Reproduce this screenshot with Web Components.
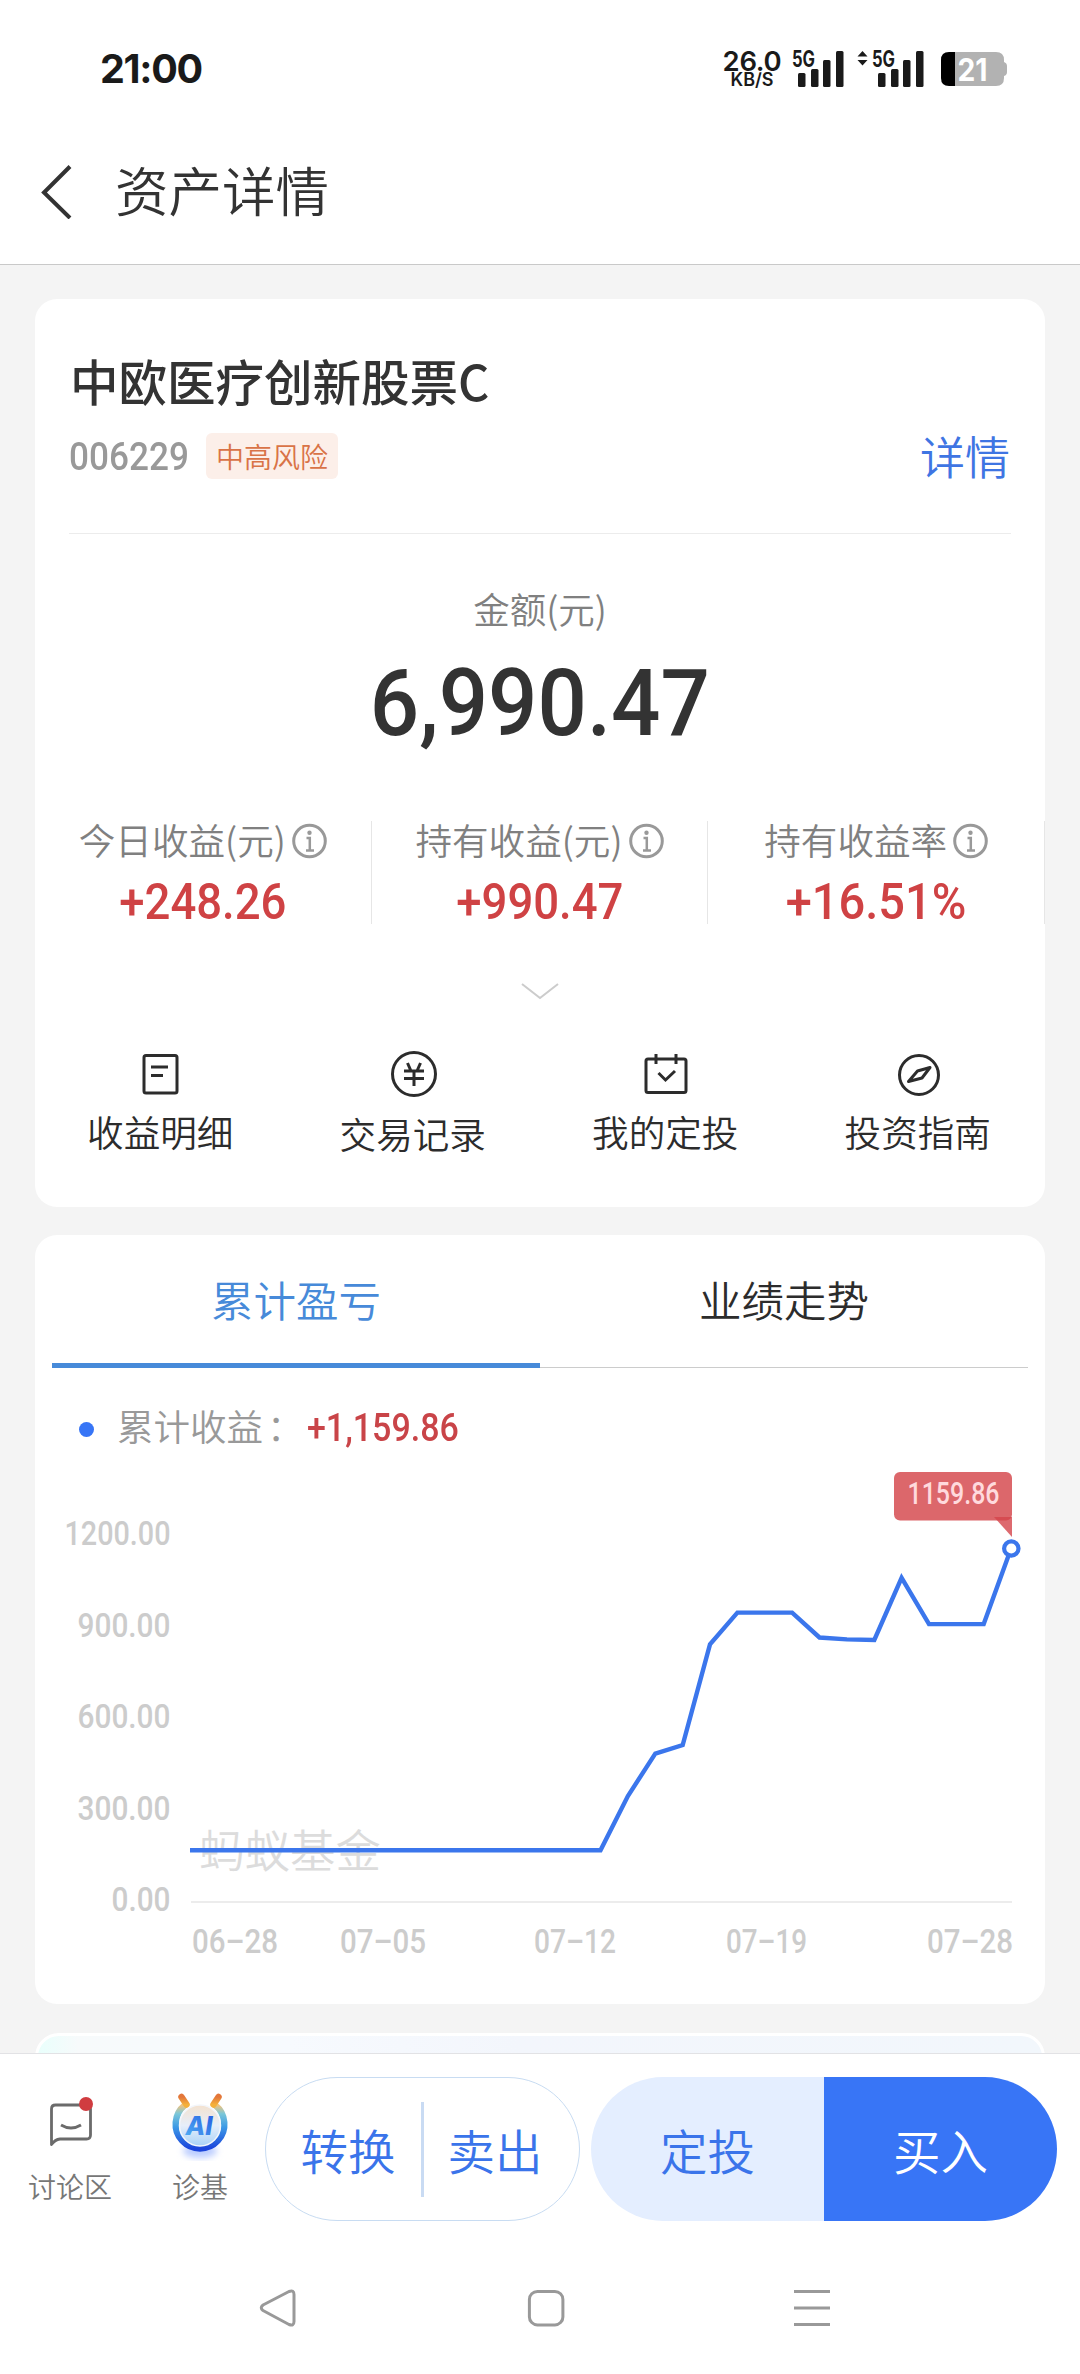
<!DOCTYPE html>
<html lang="zh-CN">
<head>
<meta charset="utf-8">
<title>资产详情</title>
<style>
	body {
		margin: 0;
		width: 1080px;
		height: 2374px;
		overflow: hidden;
		display: flex;
		flex-direction: column;
		background: #fff;
		color: #333;
		font-family: "Noto Sans CJK SC", sans-serif;
		font-weight: 350;
	}

	main {
		box-sizing: border-box;
		height: 1788px;
		padding: 34px 35px 0;
		overflow: hidden;
		background: #f4f4f4;
	}
</style>
</head>
<body>
	<status-bar></status-bar>
	<title-bar>资产详情</title-bar>
	<main>
		<asset-card></asset-card>
		<trend-card></trend-card>
		<promo-card></promo-card>
	</main>
	<action-bar></action-bar>
	<system-nav></system-nav>

<script>
// Small helper so that each class only holds its own markup
class BaseElement extends HTMLElement {
	constructor() {
		super();
		this.attachShadow({mode:'open'});
		this.shadowRoot.innerHTML = this.render();
	}
}

// Digits, slightly condensed. Size with font-size, width with --sx
class NumText extends BaseElement {
	render() {
		return `
			<style>
				:host {
					display: inline-block;
					font-family: Roboto, "Liberation Sans", sans-serif;
					font-weight: 500;
					white-space: nowrap;
					transform: scaleX(var(--sx, 0.93));
					transform-origin: var(--origin, center);
				}
			</style>
			<slot></slot>
		`;
	}
}
customElements.define('num-text', NumText);

class StatusBar extends BaseElement {
	signal() {
		return `
			<svg width="52" height="38" viewBox="0 0 52 38">
				<text x="0" y="16.5" textLength="23" lengthAdjust="spacingAndGlyphs">5G</text>
				<rect x="6" y="23" width="7.5" height="14" rx="1.5"/>
				<rect x="19" y="19" width="7.5" height="18" rx="1.5"/>
				<rect x="31" y="10" width="7.5" height="27" rx="1.5"/>
				<rect x="44" y="1" width="7.5" height="36" rx="1.5"/>
			</svg>
		`;
	}

	render() {
		return `
			<style>
				:host {
					box-sizing: border-box;
					height: 118px;
					padding: 19px 73px 0 100px;
					display: flex;
					align-items: center;
					color: #1a1a1a;
					font-family: Inter, sans-serif;
				}
				.time {
					flex: 1;
					font-size: 39.5px;
					font-weight: 700;
					letter-spacing: -1.3px;
				}
				.net {
					display: flex;
					flex-direction: column;
					align-items: center;
					width: 58px;
					margin-right: 11px;
					font-weight: 600;
				}
				.net b { font-weight: 600; font-size: 27.5px; line-height: 22px; letter-spacing: -0.3px; }
				.net span { font-size: 18px; line-height: 15px; }
				svg { display: block; overflow: visible; fill: #1a1a1a; }
				svg text { font: 700 22.5px Inter, sans-serif; }
				.arrows { margin: 0 4px 0 13px; }
				.battery { margin-left: 17px; }
			</style>
			<span class="time">21:00</span>
			<div class="net"><b>26.0</b><span>KB/S</span></div>
			${this.signal()}
			<svg class="arrows" width="11" height="38" viewBox="0 0 11 38">
				<path d="M5.5 1L10.5 6.5H.5zM5.5 15.5L10.5 10H.5z"/>
			</svg>
			${this.signal()}
			<svg class="battery" width="66" height="34" viewBox="0 0 66 34">
				<path fill="#b2b2b2" d="M14 0H55Q63 0 63 8V10Q66 11 66 14V20Q66 23 63 24V26Q63 34 55 34H14z"/>
				<path fill="#000" d="M14 0H8Q0 0 0 8V26Q0 34 8 34H14z"/>
				<text x="16.5" y="29" textLength="30" lengthAdjust="spacingAndGlyphs" style="fill:#fff;font-size:31px">21</text>
			</svg>
		`;
	}
}
customElements.define('status-bar', StatusBar);

class TitleBar extends BaseElement {
	render() {
		return `
			<style>
				:host {
					box-sizing: border-box;
					height: 147px;
					padding-left: 40px;
					display: flex;
					align-items: center;
					border-bottom: 1px solid #c9c9c9;
					font-size: 53.5px;
				}
				svg { margin: 1px 43px 0 0; }
				span { line-height: 60px; padding-bottom: 5px; }
			</style>
			<svg width="32" height="54" viewBox="0 0 32 54" fill="none" stroke="#333" stroke-width="4">
				<path d="M30 1.5L4 27.5L30 53"/>
			</svg>
			<span><slot></slot></span>
		`;
	}
}
customElements.define('title-bar', TitleBar);

// One profit column: label in the default slot, value attribute below it
class ProfitStat extends BaseElement {
	render() {
		return `
			<style>
				:host {
					flex: 1;
					box-sizing: border-box;
					height: 103px;
					display: flex;
					flex-direction: column;
					align-items: center;
					border-right: 1px solid #e6e6e6;
				}
				.label {
					display: flex;
					align-items: center;
					height: 38px;
					color: #808080;
					font-size: 36.6px;
					line-height: 36px;
					white-space: nowrap;
				}
				.label span { padding-bottom: 1px; }
				svg { margin-left: 6px; }
				num-text {
					margin-top: 20px;
					color: #cf4244;
					font-size: 50px;
					line-height: 46px;
				}
			</style>
			<div class="label">
				<span><slot></slot></span>
				<svg width="35" height="38" viewBox="0 0 35 38" fill="none" stroke="#999" stroke-width="3">
					<circle cx="17.5" cy="20" r="15.8"/>
					<path stroke-width="2.5" d="M14.5 17H17.8V29M14 29.5H22"/>
					<circle cx="17.5" cy="11.8" r="2.2" fill="#999" stroke="none"/>
				</svg>
			</div>
			<num-text style="--sx:${this.getAttribute('sx') || '.91'}">${this.getAttribute('value')}</num-text>
		`;
	}
}
customElements.define('profit-stat', ProfitStat);

// Icon with a caption, the icon goes in the "icon" slot
class ActionLink extends BaseElement {
	render() {
		return `
			<style>
				:host {
					flex: 1;
					display: flex;
					flex-direction: column;
					align-items: center;
					color: #2c2c2c;
					font-size: 36.6px;
					line-height: 44px;
				}
				.icon { height: 46px; margin-bottom: var(--gap, 13px); }
				.text { margin-left: -2px; }
				::slotted(svg) { display: block; }
			</style>
			<div class="icon"><slot name="icon"></slot></div>
			<div class="text"><slot></slot></div>
		`;
	}
}
customElements.define('action-link', ActionLink);

class AssetCard extends BaseElement {
	render() {
		return `
			<style>
				:host {
					box-sizing: border-box;
					height: 908px;
					margin-bottom: 28px;
					padding-top: 51px;
					display: flex;
					flex-direction: column;
					border-radius: 22px;
					background: #fff;
				}
				h1 {
					margin: 0 0 23px 35px;
					font-size: 48.5px;
					font-weight: 500;
					line-height: 60px;
				}
				.row {
					display: flex;
					align-items: center;
					height: 46px;
					margin: 0 34px;
					padding-bottom: 54px;
					border-bottom: 1px solid #ececec;
				}
				.code { width: 137px; margin-top: 2px; color: #999; font-size: 38px; --sx: .925; --origin: left; }
				.risk {
					padding: 0 10px;
					border-radius: 6px;
					background: #fcefe9;
					color: #d97347;
					font-size: 28px;
					line-height: 46px;
				}
				.more { margin: 0 1px 0 auto; color: #3f75e3; font-size: 45px; line-height: 46px; padding-bottom: 1px; }
				.caption { margin-top: 50px; text-align: center; color: #808080; font-size: 36.5px; line-height: 50px; }
				.amount { margin: 15px auto 62px; font-size: 93px; line-height: 110px; --sx: .935; }
				.stats, .links { display: flex; }
				.fold { display: block; margin: 59px auto 51px; }
				.links svg { fill: none; stroke: #2c2c2c; stroke-width: 3; }
			</style>
			<h1>中欧医疗创新股票C</h1>
			<div class="row">
				<num-text class="code">006229</num-text>
				<span class="risk">中高风险</span>
				<span class="more">详情</span>
			</div>
			<div class="caption">金额(元)</div>
			<num-text class="amount">6,990.47</num-text>
			<div class="stats">
				<profit-stat value="+248.26">今日收益(元)</profit-stat>
				<profit-stat value="+990.47">持有收益(元)</profit-stat>
				<profit-stat value="+16.51%" sx=".94">持有收益率</profit-stat>
			</div>
			<svg class="fold" width="38" height="17" viewBox="0 0 38 17" fill="none" stroke="#ccc" stroke-width="2">
				<path d="M1 1L19 15L37 1"/>
			</svg>
			<div class="links">
				<action-link>
					<svg slot="icon" width="46" height="46" viewBox="0 0 46 46">
						<rect x="6" y="4.5" width="33" height="37.5" rx="2"/>
						<path d="M13 16H30M13 24.5H25"/>
					</svg>
					收益明细
				</action-link>
				<action-link style="--gap:15px">
					<svg slot="icon" width="46" height="46" viewBox="0 0 46 46">
						<circle cx="23" cy="23" r="21.5"/>
						<path d="M16.5 12L20 20M29.5 12L26 20M13 20H33M13 27.5H33M23 20V35"/>
					</svg>
					交易记录
				</action-link>
				<action-link>
					<svg slot="icon" width="46" height="46" viewBox="0 0 46 46">
						<rect x="3" y="8" width="40" height="33.5" rx="2"/>
						<path d="M13 3V13M33 3V13M15.5 22L22.5 29L32 20"/>
					</svg>
					我的定投
				</action-link>
				<action-link>
					<svg slot="icon" width="46" height="46" viewBox="0 0 46 46">
						<circle cx="23" cy="24" r="19.5"/>
						<path stroke-linejoin="round" d="M12.5 30.5L21.5 20L34 16.5L26 27z"/>
					</svg>
					投资指南
				</action-link>
			</div>
		`;
	}
}
customElements.define('asset-card', AssetCard);

class ProfitChart extends BaseElement {
	render() {
		// daily cumulative profit, 06-28 to 07-28
		const values = [
			...Array(16).fill(170),
			348, 487, 515, 846, 950, 950, 950, 868, 862, 860, 1064, 912, 912, 912, 1159.86
		];
		const left = 155;
		const bottom = 451;
		const stepX = 27.37;
		const px = i => left + i * stepX;
		const py = v => bottom - v * 91.4 / 300;
		const points = values.map((v, i) => `${px(i).toFixed(1)},${py(v).toFixed(1)}`).join(' ');

		const yLabels = [1200, 900, 600, 300, 0].map(v => `
			<text x="135.5" y="${py(v) + 9}" text-anchor="end" textLength="${v > 999 ? 106 : v ? 93 : 59}" lengthAdjust="spacingAndGlyphs">${v.toFixed(2)}</text>
		`).join('');

		const xLabels = [['06–28', 157, 86], ['07–05', 305, 86], ['07–12', 499, 82], ['07–19', 691, 81], ['07–28', 892, 86]].map(([t, x, w]) => `
			<text x="${x}" y="502" textLength="${w}" lengthAdjust="spacingAndGlyphs">${t}</text>
		`).join('');

		return `
			<style>
				:host { display: block; height: 553px; }
				svg { display: block; }
				text { font: 500 33px Roboto, "Liberation Sans", sans-serif; fill: #ccc; }
				.mark { font: 350 45.5px "Noto Sans CJK SC", sans-serif; fill: #dcdcdc; }
				.tip { font-size: 30.5px; fill: #ffdadd; }
			</style>
			<svg width="1010" height="553" viewBox="0 0 1010 553">
				${yLabels}
				${xLabels}
				<path d="M156 451H977" stroke="#e6e6e6" stroke-width="1.5"/>
				<text class="mark" x="164" y="417">蚂蚁基金</text>
				<polyline points="${points}" fill="none" stroke="#3b76ec" stroke-width="4.4"/>
				<rect x="859" y="21" width="118" height="48.5" rx="6" fill="#dc676b"/>
				<path d="M959 66H977V86z" fill="#d4454b" opacity=".8"/>
				<text class="tip" x="872.5" y="53" textLength="92" lengthAdjust="spacingAndGlyphs">1159.86</text>
				<circle cx="976.3" cy="97.5" r="7.2" fill="#fff" stroke="#3b76ec" stroke-width="4.2"/>
			</svg>
		`;
	}
}
customElements.define('profit-chart', ProfitChart);

class TrendCard extends BaseElement {
	render() {
		return `
			<style>
				:host {
					display: block;
					height: 769px;
					margin-bottom: 29px;
					border-radius: 22px;
					background: #fff;
				}
				.tabs {
					display: flex;
					height: 133px;
					margin: 0 17px;
					text-align: center;
					font-size: 42.5px;
					line-height: 128px;
					color: #2c2c2c;
				}
				.tabs span { flex: 1; box-sizing: border-box; border-bottom: 1px solid #ccc; }
				.tabs .active { color: #478ad9; border-bottom: 5px solid #478ad9; }
				.legend {
					display: flex;
					align-items: center;
					height: 50px;
					margin-top: 33px;
					padding-left: 44px;
					color: #999;
					font-size: 36.5px;
					line-height: 50px;
				}
				.dot { width: 15px; height: 15px; margin: 7px 23px 0 0; border-radius: 50%; background: #3775f6; }
				.legend div { width: 190px; white-space: nowrap; }
				.legend b { font-weight: inherit; margin-left: 4px; }
				num-text { margin-top: 3px; color: #c94448; font-size: 38.5px; --sx: .883; --origin: left; }
			</style>
			<div class="tabs"><span class="active">累计盈亏</span><span>业绩走势</span></div>
			<div class="legend"><i class="dot"></i><div>累计收益<b>：</b></div><num-text>+1,159.86</num-text></div>
			<profit-chart></profit-chart>
		`;
	}
}
customElements.define('trend-card', TrendCard);

// Top edge of the next card, the rest is under the action bar
class PromoCard extends BaseElement {
	render() {
		return `
			<style>
				:host {
					display: block;
					box-sizing: border-box;
					height: 100px;
					border: 3px solid #fff;
					border-radius: 24px;
					background: linear-gradient(90deg, #e9fffc 0, #f7fafb 40px, #f7fafe 250px, #f3f6fc 480px, #f2f7fc);
				}
			</style>
		`;
	}
}
customElements.define('promo-card', PromoCard);

class ActionBar extends BaseElement {
	render() {
		return `
			<style>
				:host {
					box-sizing: border-box;
					height: 189px;
					padding: 23px 23px 0 0;
					display: flex;
					border-top: 1px solid #e2e2e5;
					background: #fff;
				}
				.quick {
					width: 140px;
					padding-top: 16px;
					text-align: center;
					color: #777;
					font-size: 28px;
					line-height: 34px;
				}
				.quick + .quick { width: 120px; }
				.quick svg { display: block; margin: 0 auto 8px; }
				.pill {
					box-sizing: border-box;
					height: 144px;
					display: flex;
					align-items: center;
					border-radius: 72px;
					overflow: hidden;
					color: #3a74ea;
					font-size: 47.5px;
					text-align: center;
				}
				.pill span { flex: 1; line-height: 145px; }
				.line { width: 315px; margin: 0 11px 0 5px; border: 1px solid #c8dcf2; }
				.line i { width: 3px; height: 95px; background: #c9dbf3; }
				.line span:first-child { text-indent: 9px; }
				.line span:last-child { text-indent: -13px; }
				.solid { width: 466px; }
				.solid span { background: #e4eeff; }
				.solid .buy { background: #3875f6; color: #fff; }
			</style>
			<div class="quick">
				<svg width="60" height="68" viewBox="0 0 60 68" fill="none" stroke="#6b6b6b" stroke-width="2.8">
					<path d="M11.5 51.5V16Q11.5 12 15.5 12H46.5Q50.5 12 50.5 16V42Q50.5 46 46.5 46H20Q15 46.5 11.5 51.5z" stroke-linejoin="round"/>
					<path d="M21 32Q31 38 41 32"/>
					<circle cx="46" cy="11" r="7" fill="#d03c40" stroke="none"/>
				</svg>
				讨论区
			</div>
			<div class="quick">
				<svg width="60" height="68" viewBox="0 0 60 68">
					<defs>
						<linearGradient id="ring" x1="0" y1="0" x2="0" y2="1">
							<stop offset="0" stop-color="#f2c27a"/>
							<stop offset=".2" stop-color="#7cc7d8"/>
							<stop offset=".5" stop-color="#3d9be6"/>
							<stop offset="1" stop-color="#1b45dc"/>
						</linearGradient>
						<linearGradient id="face" x1="0" y1="0" x2="0" y2="1">
							<stop offset="0" stop-color="#f4e2cf"/>
							<stop offset=".5" stop-color="#e6eefa"/>
							<stop offset="1" stop-color="#a9d3f8"/>
						</linearGradient>
						<linearGradient id="ant" x1="0" y1="0" x2="0" y2="1">
							<stop offset="0" stop-color="#e3763a"/>
							<stop offset="1" stop-color="#f4b03a"/>
						</linearGradient>
						<linearGradient id="ai" x1="0" y1="1" x2="1" y2="0">
							<stop offset="0" stop-color="#53b4f5"/>
							<stop offset="1" stop-color="#2457e0"/>
						</linearGradient>
						<filter id="soft" x="-50%" y="-50%" width="200%" height="200%"><feGaussianBlur stdDeviation="3"/></filter>
					</defs>
					<ellipse cx="30" cy="58" rx="17" ry="7" fill="#bccdff" filter="url(#soft)"/>
					<path d="M15 12A24.3 24.3 0 1 0 45 12" fill="none" stroke="url(#ring)" stroke-width="6.5"/>
					<path d="M11.5 4L16.5 11.5M48.5 4L43.5 11.5" stroke="url(#ant)" stroke-width="6.5" stroke-linecap="round"/>
					<circle cx="30" cy="32.5" r="20.5" fill="url(#face)" stroke="#f3f6fb" stroke-width="1.5"/>
					<text x="15.5" y="41.5" textLength="27" lengthAdjust="spacingAndGlyphs" fill="url(#ai)" style="font:italic 800 26px Inter, sans-serif">AI</text>
				</svg>
				诊基
			</div>
			<div class="pill line"><span>转换</span><i></i><span>卖出</span></div>
			<div class="pill solid"><span>定投</span><span class="buy">买入</span></div>
		`;
	}
}
customElements.define('action-bar', ActionBar);

class SystemNav extends BaseElement {
	render() {
		return `
			<style>
				:host {
					height: 132px;
					padding: 0 248px 0 258px;
					display: flex;
					align-items: center;
					justify-content: space-between;
				}
				svg { fill: none; stroke: #999; stroke-width: 3; }
			</style>
			<svg width="40" height="40" viewBox="0 0 40 40">
				<path stroke-linejoin="round" d="M5 17Q1.5 19.8 5 22.5L31 36.5Q36 38.5 36 33.5V6.5Q36 1.5 31 3.5z"/>
			</svg>
			<svg width="40" height="40" viewBox="0 0 40 40"><rect x="4.4" y="3.4" width="33.5" height="33.5" rx="8"/></svg>
			<svg width="40" height="40" viewBox="0 0 40 40"><path d="M2 3.5H38M2 20H38M2 36.5H38"/></svg>
		`;
	}
}
customElements.define('system-nav', SystemNav);
</script>
</body>
</html>
